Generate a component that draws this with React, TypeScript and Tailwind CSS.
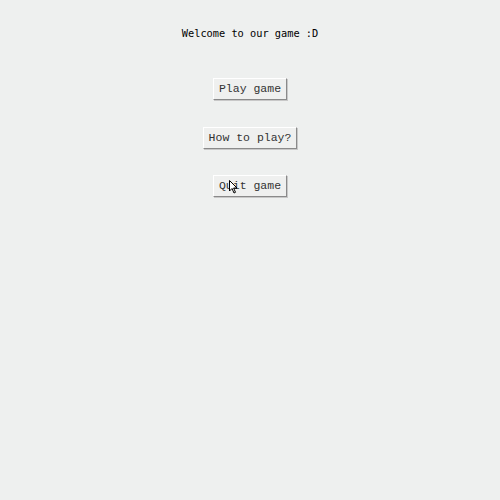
import React from 'react';

const MenuButton: React.FC<{ label: string; cursor?: boolean }> = ({ label, cursor }) => (
  <div className="relative flex">
    <button className="block px-[5px] h-[22px] bg-[#eff0ef] text-[#333] text-[11.5px] leading-none font-['Liberation_Mono',monospace] border border-t-white border-l-white border-r-[#8a8a8a] border-b-[#8a8a8a] shadow-[1px_1px_0_#c8c8c8]">
      {label}
    </button>
    {cursor && (
      <svg className="absolute left-[16px] top-[5px]" width="9" height="14" viewBox="0 0 9 14">
        <path d="M0.5 0.5 L0.5 11 L3 8.5 L5 13 L6.5 12.3 L4.6 8 L8 8 Z" fill="#fff" stroke="#000" strokeWidth="1" />
      </svg>
    )}
  </div>
);

const App: React.FC = () => {
  return (
    <div className="w-[500px] h-[500px] bg-[#eef0ef] flex flex-col items-center pt-[26px]">
      <h1 className="text-[10.3px] leading-[14px] text-black font-['DejaVu_Sans_Mono',monospace]">
        Welcome to our game :D
      </h1>
      <div className="flex flex-col items-center gap-[26.5px] mt-[38px]">
        <MenuButton label="Play game" />
        <MenuButton label="How to play?" />
        <MenuButton label="Quit game" cursor />
      </div>
    </div>
  );
};

export default App;
